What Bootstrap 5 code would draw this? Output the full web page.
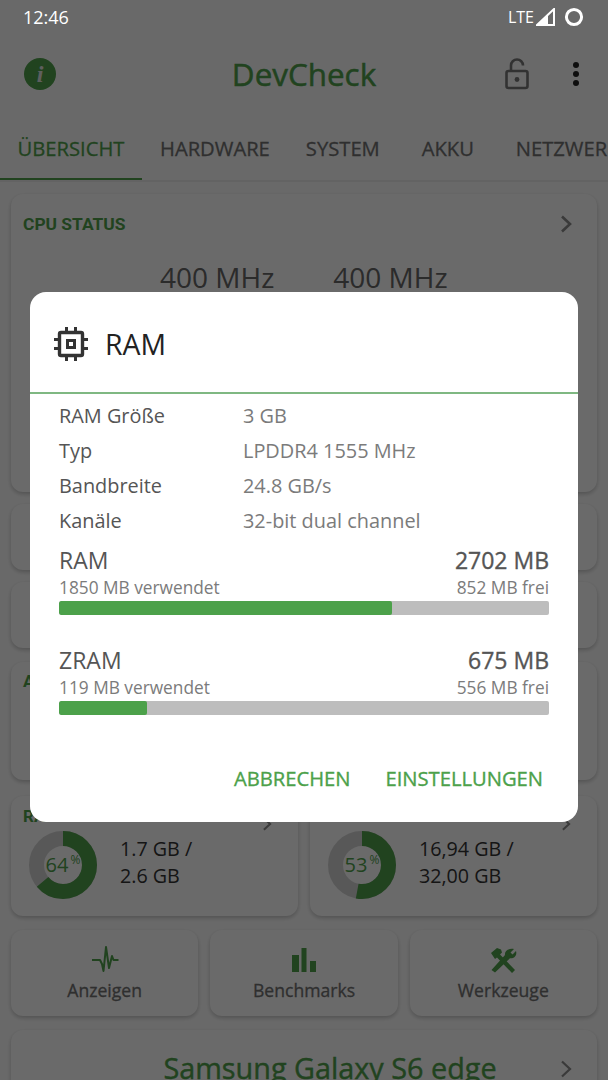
<!DOCTYPE html>
<html lang="de">
<head>
<meta charset="utf-8">
<title>DevCheck</title>
<link href="https://cdn.jsdelivr.net/npm/bootstrap@5.3.0/dist/css/bootstrap.min.css" rel="stylesheet">
<style>
html,body{height:1080px;overflow:hidden}
body{background:#fbfbfb;font-family:"Open Sans","Noto Sans",sans-serif;color:#555;position:relative}
.stat-bar{height:34px;padding:0 24px 0 23px;color:#fff;position:relative;z-index:20;font-size:18px}
.stat-lte{font-size:16px;margin-right:2px;margin-left:2px}
.tool-bar{height:82px;padding:0 28px 3px 24px;position:relative}
.app-title{font-size:31.4px;color:#4f9f4b;position:absolute;left:0;right:0;text-align:center;top:18px;line-height:44px;-webkit-text-stroke:.5px currentColor}
.info-dot{width:32px;height:32px;border-radius:50%;background:#4f9f4b;color:#e2e2e2;font:italic 700 24px/32px "Liberation Serif",serif;text-align:center}
.tool-end{gap:42px}
.tab-strip{height:66px;border-bottom:2px solid #ececec;overflow:hidden;white-space:nowrap;position:relative}
.tab-item{min-width:100px;padding:0 18px;font-size:20.2px;color:#707070;line-height:64px;text-align:center;flex:none;height:64px;-webkit-text-stroke:.3px currentColor}
.tab-on{color:#4f9f4b;box-shadow:inset 0 -2px 0 #4f9f4b;position:relative;width:142px;padding:0}
.tab-on::after{content:"";position:absolute;left:0;right:0;bottom:-2px;height:2px;background:#4f9f4b}
.page-body{padding:12px 11px 0;display:flex;flex-direction:column;gap:12px}
.sheet{background:#fcfcfc;border-radius:12px;box-shadow:0 2px 4px rgba(0,0,0,.22);position:relative}
.sheet-h{height:298px;padding:18px 12px}
.sheet-t{font:700 17.4px/24px Roboto,sans-serif;color:#4f9f4b}
.chev{position:absolute;right:25px;top:21px}
.mhz{font-size:28px;line-height:38px;color:#666;margin-top:22px;padding-left:137px;gap:59px}
.slim{height:66px}
.mid{height:118px;margin-top:2px;padding:7px 12px}
.mid-ring{display:block;margin:3px 0 0 6px}
.duo{gap:12px;margin-top:4px}
.duo>.sheet{flex:1;height:120px}
.duo-t{position:absolute;left:12px;top:8px;font:700 17px/24px Roboto,sans-serif;color:#4f9f4b}
.duo-body{position:absolute;left:17px;top:34px;gap:22px}
.ring-box{width:70px;height:70px;position:relative}
.ring-txt{position:absolute;inset:0;display:flex;align-items:center;justify-content:center;color:#4f9f4b;font-size:20px}
.ring-txt sup{font-size:12px;top:-.4em;margin-left:2px}
.duo-val{font-size:19.7px;line-height:27px;color:#333;margin-top:-6px}
.tri{gap:12px;margin-top:2px}
.tri>.sheet{flex:1;height:86px;text-align:center;padding-top:16px}
.tri-l{font-size:17.6px;color:#707070;line-height:24px;margin-top:4px;-webkit-text-stroke:.3px currentColor}
.phone-name{height:90px;text-align:center;font-size:28.8px;color:#4f9f4b;line-height:76px;margin-top:2px;padding-left:52px;-webkit-text-stroke:.4px currentColor}
.scrim{position:absolute;inset:0;background:rgba(0,0,0,.58);z-index:10;padding:292px 30px 0}
.dlg{height:530px;border-radius:16px;background:#fff;border:0;overflow:hidden}
.dlg-head{height:102px;border-bottom:2px solid #7fb882;padding:4px 24px 0;gap:17px}
.dlg-title{font-size:28.4px;color:#222;line-height:1}
.dlg-body{padding:4px 29px 0}
.spec{font-size:19.9px;line-height:35px;display:flex}
.spec-k{width:184px;color:#555}
.spec-v{color:#7b7b7b}
.mem-a{font-size:23px;line-height:30px;color:#555;margin-top:7px}
.mem-v{-webkit-text-stroke:.35px currentColor}
.mem-b{font-size:17.3px;line-height:22px;color:#7b7b7b;margin-top:2px}
.mem-bar{height:14px;border-radius:2px;background:#bdbdbd;margin-top:2px}
.mem-bar .progress-bar{background:#4ca14a;border-radius:2px}
.mem2{margin-top:30px}
.dlg-foot{position:absolute;left:0;right:0;bottom:27px;padding-right:35px;gap:35px;font-size:20.2px;color:#4ca14a;line-height:34px;-webkit-text-stroke:.35px currentColor}
</style>
</head>
<body>
<div class="stat-bar d-flex align-items-center justify-content-between">
  <span>12:46</span>
  <span class="d-flex align-items-center">
    <span class="stat-lte">LTE</span>
    <svg width="20" height="18" viewBox="0 0 20 18"><path d="M1 17 18 1v16z" fill="none" stroke="#fff" stroke-width="2"/><path d="M1 17 12 7v10z" fill="#fff"/></svg>
    <svg class="ms-2" width="20" height="20" viewBox="0 0 20 20"><circle cx="10" cy="10" r="7.6" fill="none" stroke="#fff" stroke-width="3"/></svg>
  </span>
</div>
<div class="tool-bar d-flex align-items-center justify-content-between">
  <div class="info-dot">i</div>
  <div class="app-title">DevCheck</div>
  <div class="tool-end d-flex align-items-center">
    <svg width="26" height="32" viewBox="0 0 26 32"><rect x="2.5" y="13" width="21" height="17" rx="2" fill="none" stroke="#777" stroke-width="2.6"/><path d="M7 13V7.5a6 6 0 0 1 12 0" fill="none" stroke="#777" stroke-width="2.6"/><circle cx="13" cy="21.5" r="2.4" fill="#777"/></svg>
    <svg width="8" height="26" viewBox="0 0 8 26"><circle cx="4" cy="4" r="3" fill="#222"/><circle cx="4" cy="13" r="3" fill="#222"/><circle cx="4" cy="22" r="3" fill="#222"/></svg>
  </div>
</div>
<div class="tab-strip d-flex">
  <div class="tab-item tab-on">ÜBERSICHT</div>
  <div class="tab-item">HARDWARE</div>
  <div class="tab-item">SYSTEM</div>
  <div class="tab-item">AKKU</div>
  <div class="tab-item">NETZWERK</div>
</div>
<div class="page-body">
  <div class="sheet sheet-h">
    <div class="sheet-t">CPU STATUS</div>
    <svg class="chev" width="12" height="18" viewBox="0 0 12 18"><path d="M2 1.5 10 9l-8 7.5" fill="none" stroke="#8a8a8a" stroke-width="2.6"/></svg>
    <div class="mhz d-flex"><span>400 MHz</span><span>400 MHz</span></div>
  </div>
  <div class="sheet slim"></div>
  <div class="sheet slim"></div>
  <div class="sheet mid">
    <div class="sheet-t">AKKU</div>
    <svg class="mid-ring" width="70" height="70" viewBox="0 0 70 70"><circle cx="35" cy="35" r="26.5" fill="none" stroke="#4f9f4b" stroke-width="15"/></svg>
  </div>
  <div class="duo d-flex">
    <div class="sheet">
      <div class="duo-t">RAM</div>
      <svg class="chev" width="12" height="14" viewBox="0 0 12 18"><path d="M2 1.5 10 9l-8 7.5" fill="none" stroke="#8a8a8a" stroke-width="2.6"/></svg>
      <div class="duo-body d-flex align-items-center">
        <div class="ring-box">
          <svg width="70" height="70" viewBox="0 0 70 70"><circle cx="35" cy="35" r="26.5" fill="none" stroke="#d2d2d2" stroke-width="15"/><circle cx="35" cy="35" r="26.5" fill="none" stroke="#4f9f4b" stroke-width="15" pathLength="100" stroke-dasharray="64 36" transform="rotate(-90 35 35)"/></svg>
          <div class="ring-txt">64<sup>%</sup></div>
        </div>
        <div class="duo-val">1.7 GB /<br>2.6 GB</div>
      </div>
    </div>
    <div class="sheet">
      <svg class="chev" width="12" height="14" viewBox="0 0 12 18"><path d="M2 1.5 10 9l-8 7.5" fill="none" stroke="#8a8a8a" stroke-width="2.6"/></svg>
      <div class="duo-body d-flex align-items-center">
        <div class="ring-box">
          <svg width="70" height="70" viewBox="0 0 70 70"><circle cx="35" cy="35" r="26.5" fill="none" stroke="#d2d2d2" stroke-width="15"/><circle cx="35" cy="35" r="26.5" fill="none" stroke="#4f9f4b" stroke-width="15" pathLength="100" stroke-dasharray="53 47" transform="rotate(-90 35 35)"/></svg>
          <div class="ring-txt">53<sup>%</sup></div>
        </div>
        <div class="duo-val">16,94 GB /<br>32,00 GB</div>
      </div>
    </div>
  </div>
  <div class="tri d-flex">
    <div class="sheet">
      <svg width="28" height="28" viewBox="0 0 28 28"><path d="M1 14h8l2 4 1.5 7 2.5-24 3 21 3-12 1.500 4h5" fill="none" stroke="#4f9f4b" stroke-width="2" stroke-linejoin="round"/></svg>
      <div class="tri-l">Anzeigen</div>
    </div>
    <div class="sheet">
      <svg width="28" height="28" viewBox="0 0 28 28"><path d="M2 9h7v17H2zM11.500 2h5v24h-5zM20 15h6v11h-6z" fill="#4f9f4b"/></svg>
      <div class="tri-l">Benchmarks</div>
    </div>
    <div class="sheet">
      <svg width="28" height="28" viewBox="0 0 28 28"><path d="M2 7 8 2l4 1.500 1 3-2 2 15 15.500-3 3L8 11.500 6 13z" fill="#4f9f4b"/><path d="M25 3l-3.500 3.500 2 2L27 5c1 3-.5 6-3 7-1.500.5-3 .2-3 .2L6 26.500 2.500 24 16 9c-.5-3 2-7 9-6z" fill="#4f9f4b"/></svg>
      <div class="tri-l">Werkzeuge</div>
    </div>
  </div>
  <div class="sheet phone-name">Samsung Galaxy S6 edge
    <svg class="chev" style="top:30px" width="12" height="18" viewBox="0 0 12 18"><path d="M2 1.5 10 9l-8 7.5" fill="none" stroke="#8a8a8a" stroke-width="2.2"/></svg>
  </div>
</div>

<div class="scrim">
  <div class="card dlg position-relative">
    <div class="dlg-head d-flex align-items-center">
      <svg width="34" height="34" viewBox="0 0 34 34"><rect x="5.5" y="5.5" width="23" height="23" rx="1.5" fill="none" stroke="#333" stroke-width="3.4"/><path d="M12 12h10v10H12z M15 15v4h4v-4z" fill="#333" fill-rule="evenodd"/><path d="M12.500 0v5M21.500 0v5M12.500 29v5M21.500 29v5M0 12.500h5M0 21.500h5M29 12.500h5M29 21.500h5" stroke="#333" stroke-width="3"/></svg>
      <div class="dlg-title">RAM</div>
    </div>
    <div class="dlg-body">
      <div class="spec"><span class="spec-k">RAM Größe</span><span class="spec-v">3 GB</span></div>
      <div class="spec"><span class="spec-k">Typ</span><span class="spec-v">LPDDR4 1555 MHz</span></div>
      <div class="spec"><span class="spec-k">Bandbreite</span><span class="spec-v">24.8 GB/s</span></div>
      <div class="spec"><span class="spec-k">Kanäle</span><span class="spec-v">32-bit dual channel</span></div>
      <div class="mem-a d-flex justify-content-between"><span>RAM</span><span class="mem-v">2702 MB</span></div>
      <div class="mem-b d-flex justify-content-between"><span>1850 MB verwendet</span><span>852 MB frei</span></div>
      <div class="progress mem-bar"><div class="progress-bar" style="width:68%"></div></div>
      <div class="mem-a mem2 d-flex justify-content-between"><span>ZRAM</span><span class="mem-v">675 MB</span></div>
      <div class="mem-b d-flex justify-content-between"><span>119 MB verwendet</span><span>556 MB frei</span></div>
      <div class="progress mem-bar"><div class="progress-bar" style="width:18%"></div></div>
    </div>
    <div class="dlg-foot d-flex justify-content-end"><span>ABBRECHEN</span><span>EINSTELLUNGEN</span></div>
  </div>
</div>
<script src="https://cdn.jsdelivr.net/npm/bootstrap@5.3.0/dist/js/bootstrap.bundle.min.js"></script>
</body>
</html>
